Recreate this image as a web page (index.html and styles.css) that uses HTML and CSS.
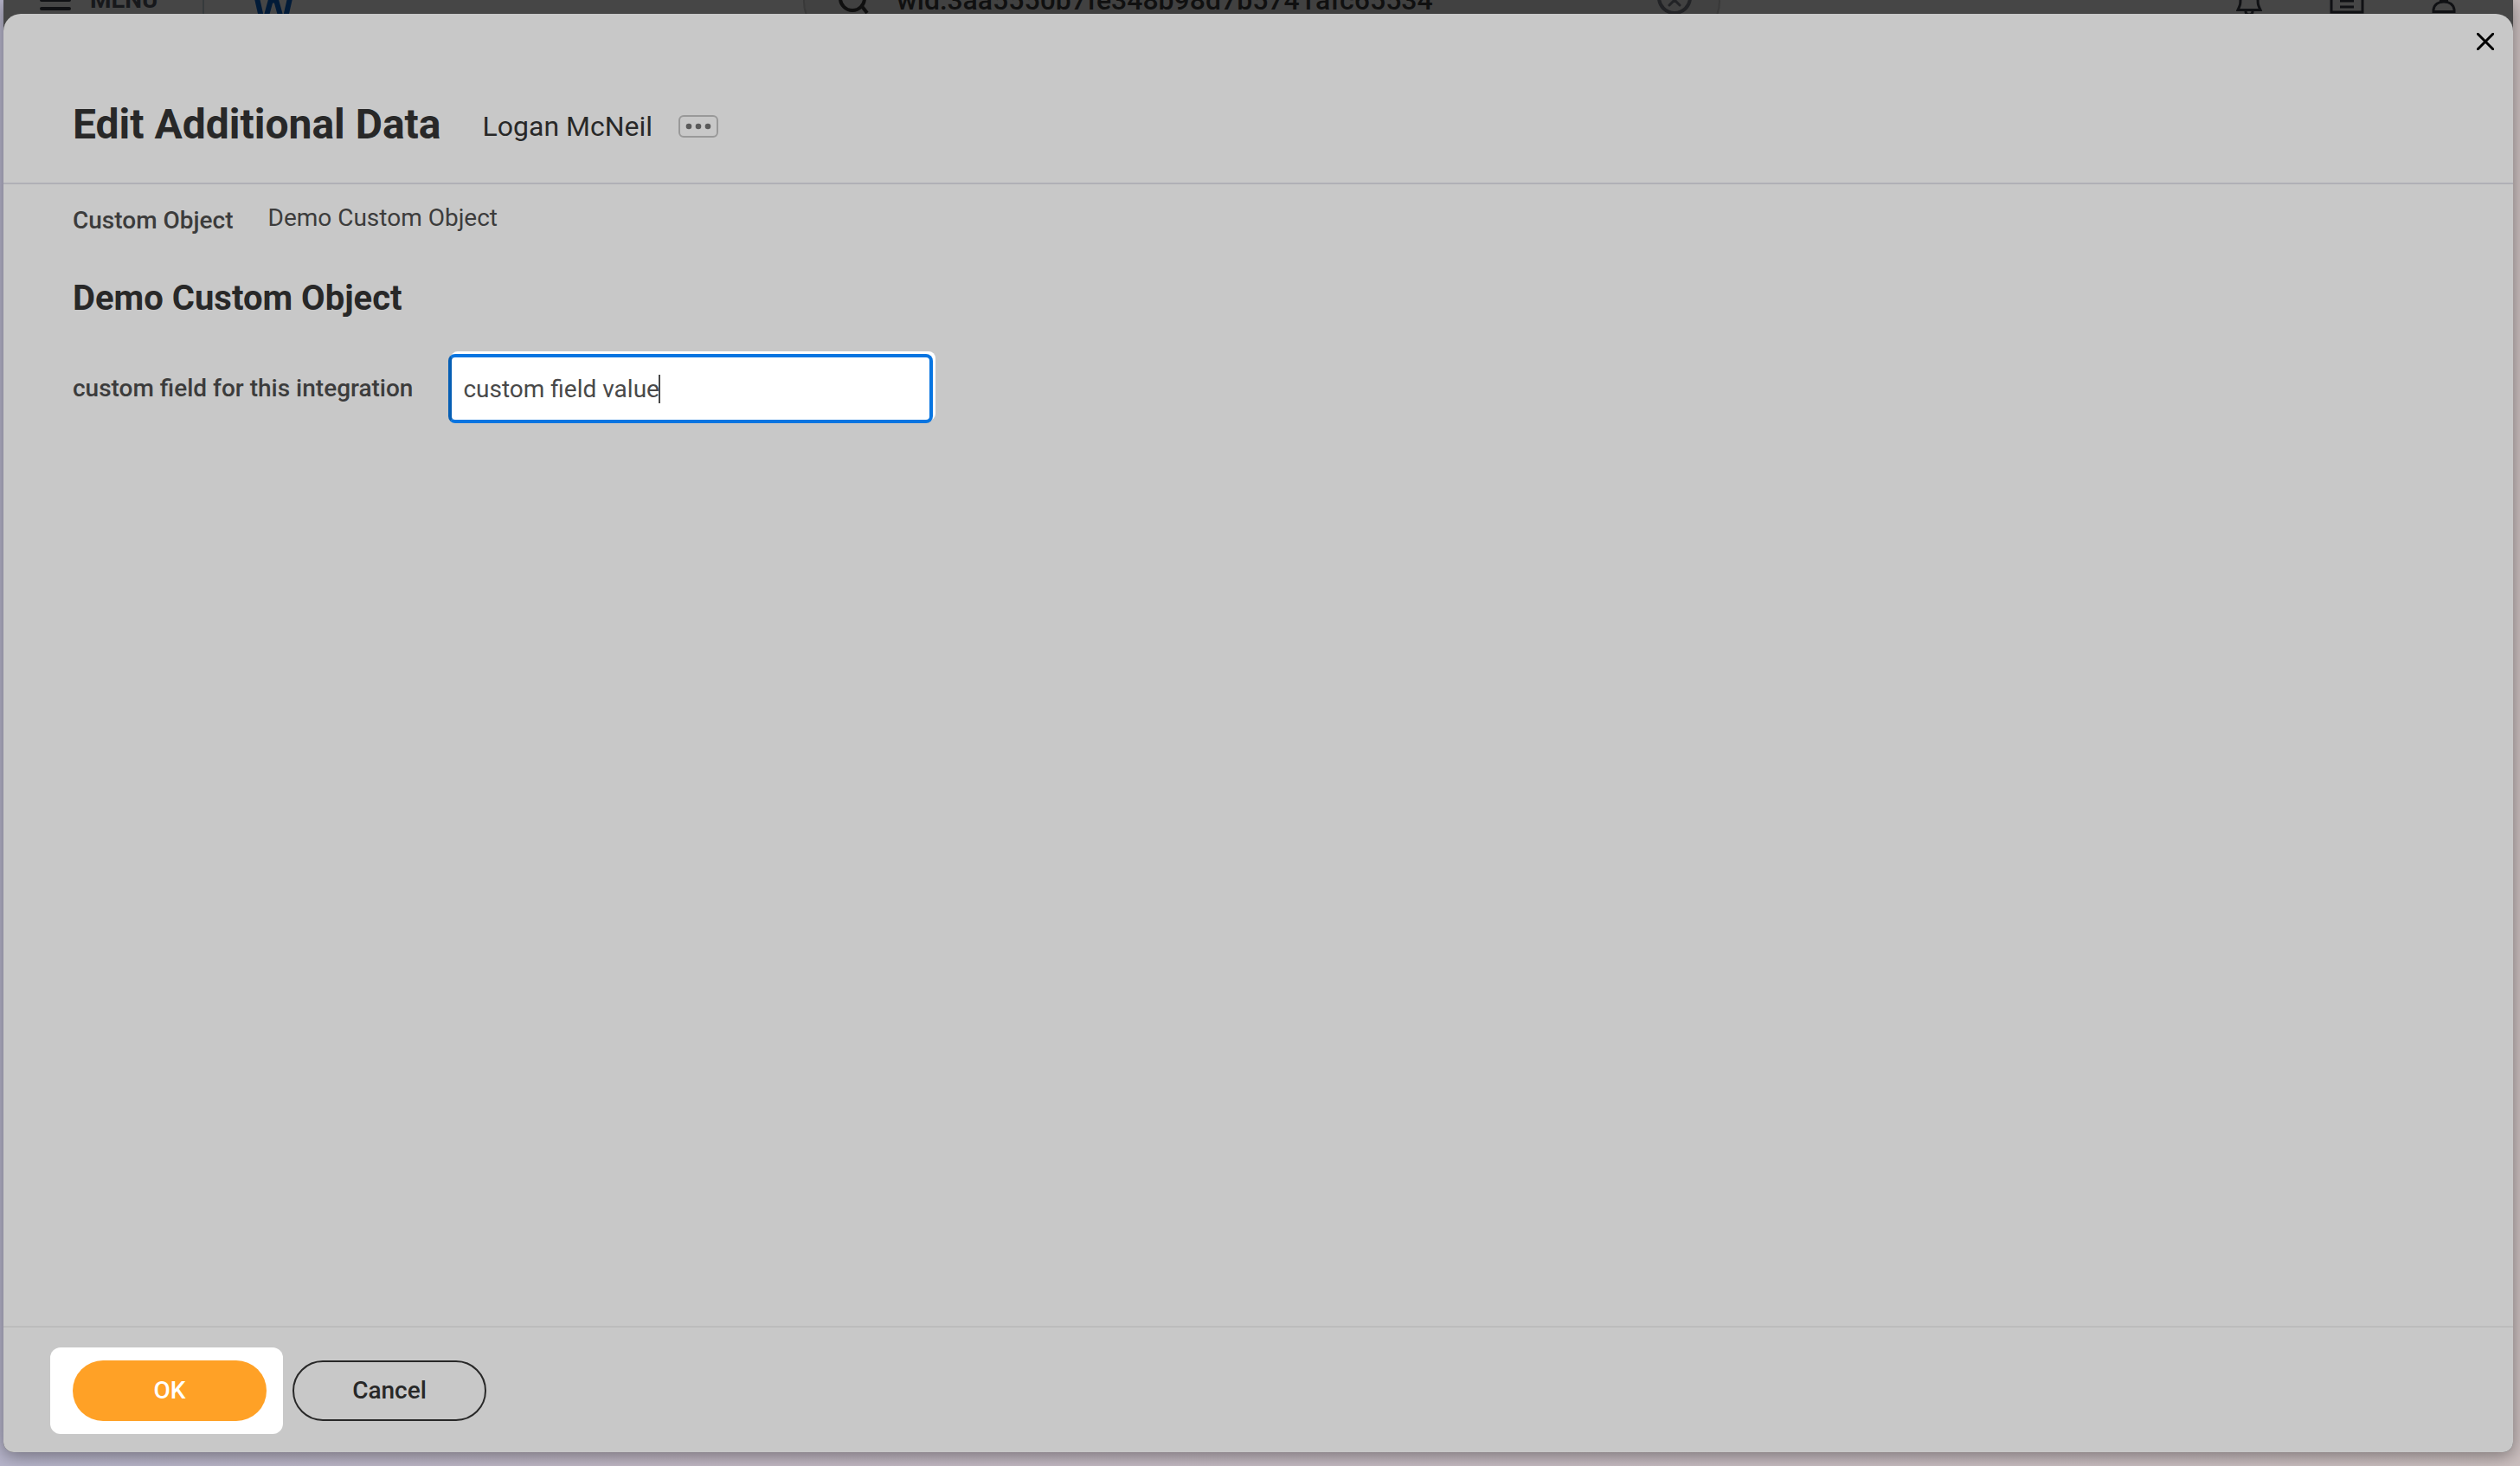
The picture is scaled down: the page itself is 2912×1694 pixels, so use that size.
FILE: index.html
```html
<!DOCTYPE html>
<html lang="en">
<head>
    <meta charset="UTF-8">
    <meta name="viewport" content="width=device-width, initial-scale=1.0">
    <title>Edit Additional Data</title>
    <link rel="stylesheet" href="styles.css">
</head>
<body>

<div class="window">
    <header class="topbar">
        <button class="menu" type="button">
            <svg width="36" height="16" viewBox="0 0 36 16"><path d="M2 0H34M2 10H34" stroke="#101114" stroke-width="4" stroke-linecap="round"/></svg>
            MENU
        </button>
        <a class="logo" href="#" aria-label="Home">
            <svg width="44" height="16" viewBox="0 0 44 16"><path d="M3 -2L8 20M14 18L20 -4M24 -4L30 18M36 20L41 -2" fill="none" stroke="#021b38" stroke-width="6"/><path d="M18 0L22 -2L26 0L22 4Z" fill="#021b38"/></svg>
        </a>
        <div class="search">
            <svg width="36" height="16" viewBox="0 0 36 16"><circle cx="17" cy="-2" r="14" fill="none" stroke="#101010" stroke-width="4"/><path d="M27 6L34 15" stroke="#101010" stroke-width="4"/></svg>
            <input type="text" aria-label="Search" value="wid:3aa5550b7fe348b98d7b5741afc65534">
            <button class="clear" type="button" aria-label="Clear search">
                <svg width="40" height="16" viewBox="0 0 40 16"><circle cx="20" cy="-3" r="18" fill="none" stroke="#222326" stroke-width="4"/><path d="M14 6L20 0L26 6M14 -6L20 0L26 -6" fill="none" stroke="#222326" stroke-width="3" stroke-linecap="round"/></svg>
            </button>
        </div>
        <nav class="tools">
            <a href="#" aria-label="Notifications"><svg width="30" height="16" viewBox="0 0 30 16"><path d="M5 -4C5 5 5 5 2 11.500H28C25 5 25 5 25 -4M11 13Q11 17 15 17Q19 17 19 13" fill="none" stroke="#101114" stroke-width="3"/></svg></a>
            <a href="#" aria-label="Inbox"><svg width="40" height="16" viewBox="0 0 40 16"><path d="M2 -4V14H38V-4M12 1H28M12 8H28" fill="none" stroke="#101114" stroke-width="3"/></svg></a>
            <a href="#" aria-label="Profile"><svg width="28" height="16" viewBox="0 0 28 16"><path d="M2 13.500V11C3 5 8 2 14 2S25 5 26 11V13.500Z" fill="none" stroke="#101114" stroke-width="3"/><path d="M9 0H19V2H9Z" fill="#101114"/></svg></a>
        </nav>
    </header>

    <main class="dialog">
        <button class="close" type="button" aria-label="Close">
            <svg width="20" height="20" viewBox="0 0 20 20"><path d="M1 1L19 19M19 1L1 19" stroke="#000" stroke-width="3" stroke-linecap="round"/></svg>
        </button>

        <div class="dialog-header">
            <h1>Edit Additional Data</h1>
            <span class="person">Logan McNeil</span>
            <button class="related" type="button" aria-label="Related actions">
                <svg width="30" height="8" viewBox="0 0 30 8"><g fill="#5a5a5a"><circle cx="4" cy="4" r="3.300"/><circle cx="15" cy="4" r="3.300"/><circle cx="26" cy="4" r="3.300"/></g></svg>
            </button>
        </div>

        <form class="dialog-form">
            <div class="content">
                <dl class="object">
                    <dt>Custom Object</dt>
                    <dd>Demo Custom Object</dd>
                </dl>
                <h2>Demo Custom Object</h2>
                <div class="field">
                    <label for="customField">custom field for this integration</label>
                    <div class="field-box">
                        <input type="text" id="customField" value="custom field value">
                        <span class="caret"></span>
                    </div>
                </div>
            </div>

            <div class="footer">
                <div class="spotlight"><button class="ok" type="button">OK</button></div>
                <button class="cancel" type="button">Cancel</button>
            </div>
        </form>
    </main>
</div>

</body>
</html>
```
FILE: styles.css
```css
* {
    box-sizing: border-box;
}
body {
    margin: 0;
    padding: 0 8px 16px 4px;
    min-height: 100vh;
    display: flex;
    flex-direction: column;
    font-family: Roboto, Arial, sans-serif;
    font-size: 28px;
    line-height: 32px;
    color: #3c3c3c;
    background: linear-gradient(90deg, #b6b4ca, #c2b8c4 30%, #cbbfbf);
}
button, input {
    font: inherit;
    color: inherit;
    margin: 0;
    padding: 0;
    border: none;
    background: none;
}
button {
    cursor: pointer;
}
svg {
    display: block;
    flex: none;
}
.window {
    flex: 1;
    display: flex;
    flex-direction: column;
    background-color: #464646;
    border-radius: 0 0 12px 12px;
    box-shadow: 0 4px 20px rgba(0, 0, 0, 0.4);
}

/* application bar, mostly scrolled out of view */
.topbar {
    height: 16px;
    overflow: hidden;
    display: flex;
    align-items: flex-end;
    padding-left: 42px;
    padding-right: 66px;
}
.menu {
    display: flex;
    align-items: flex-end;
    gap: 22px;
    width: 190px;
    border-right: 2px solid #363a3c;
    font-weight: 700;
    color: #17181b;
}
.logo {
    margin-left: 58px;
}
.search {
    display: flex;
    align-items: flex-end;
    width: 1060px;
    height: 80px;
    margin-left: auto;
    margin-bottom: -26px;
    padding: 0 31px 24px 38px;
    background-color: #414141;
    border: 2px solid #393939;
    border-radius: 40px;
}
.search input {
    flex: 1;
    min-width: 0;
    height: 32px;
    margin-left: 32px;
    font-size: 32px;
    font-weight: 500;
    color: #101010;
}
.tools {
    display: flex;
    gap: 78px;
    margin-left: auto;
    padding-left: 6px;
}

.dialog {
    position: relative;
    flex: 1;
    display: flex;
    flex-direction: column;
    background-color: #c8c8c8;
    border-radius: 20px 20px 12px 12px;
}
.close {
    position: absolute;
    top: 22px;
    right: 22px;
}
.dialog-header {
    display: flex;
    align-items: center;
    padding: 96px 80px 35px;
    border-bottom: 2px solid #b0b0b6;
    color: #282828;
}
h1 {
    margin: 0;
    font-size: 48px;
    line-height: 64px;
    font-weight: 700;
}
.person {
    margin-left: 48px;
    font-size: 32px;
    padding-top: 4px;
}
.related {
    display: flex;
    align-items: center;
    justify-content: center;
    width: 46px;
    height: 26px;
    margin-left: 30px;
    margin-top: 4px;
    border: 2px solid #999;
    border-radius: 6px;
}
.dialog-form {
    flex: 1;
    display: flex;
    flex-direction: column;
}
.content {
    flex: 1;
    padding: 23px 80px;
}
.object {
    display: flex;
    align-items: flex-start;
    gap: 40px;
    margin: 0;
}
.object dt {
    padding-top: 3px;
    font-weight: 500;
}
.object dd {
    margin: 0;
}
h2 {
    margin: 50px 0 40px;
    font-size: 40px;
    line-height: 48px;
    font-weight: 700;
    color: #282828;
}
.field {
    display: flex;
    align-items: center;
    gap: 41px;
}
.field label {
    font-weight: 500;
}
.field-box {
    position: relative;
    width: 560px;
}
.field-box input {
    width: 100%;
    height: 80px;
    padding: 0 13px;
    display: block;
    color: #494949;
    background-color: #fff;
    border: 4px solid #0875e1;
    border-left-color: #065eb4;
    border-radius: 8px;
    outline: none;
    box-shadow: 3px -3px 0 #fff;
}
.caret {
    position: absolute;
    top: 24px;
    left: 243px;
    width: 2px;
    height: 33px;
    background-color: #494949;
}
.footer {
    display: flex;
    align-items: center;
    gap: 11px;
    padding: 23px 54px 21px;
    border-top: 2px solid #bcbcbc;
}
.spotlight {
    padding: 15px 19px 15px 26px;
    background-color: #fff;
    border-radius: 12px;
}
.ok, .cancel {
    display: block;
    width: 224px;
    height: 70px;
    border-radius: 35px;
    font-weight: 500;
}
.ok {
    background-color: #ffa126;
    color: #fff;
}
.cancel {
    border: 2px solid #282828;
    color: #282828;
}
```
